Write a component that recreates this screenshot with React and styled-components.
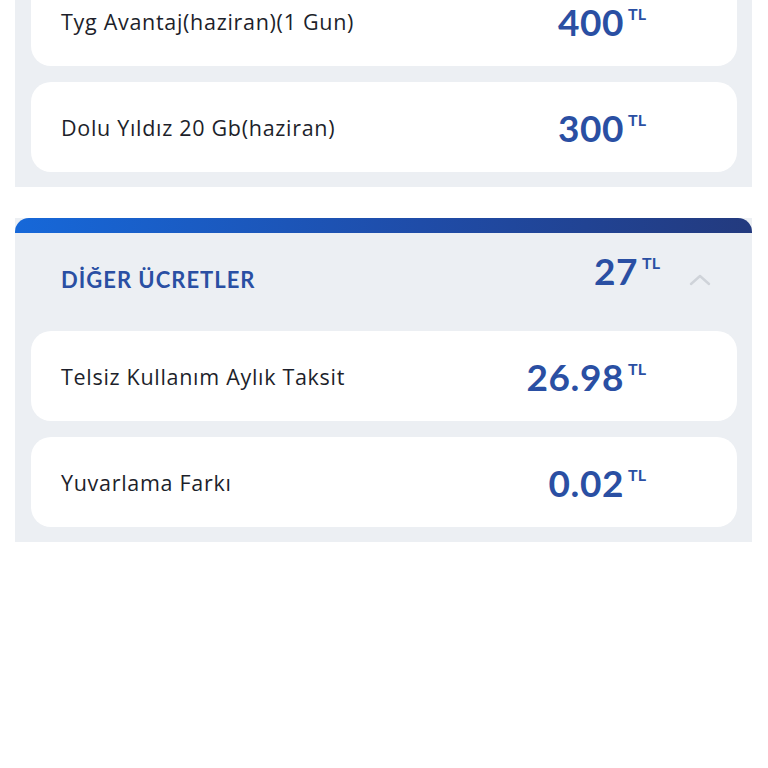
import React from "react";
import styled, { createGlobalStyle } from "styled-components";

const Global = createGlobalStyle`
  html, body { margin: 0; padding: 0; background: #ffffff; }
  body { font-family: "Lato", "Open Sans", sans-serif; }
`;

const Page = styled.div`
  display: flex;
  flex-direction: column;
  gap: 31px;
  padding: 0 16px 0 15px;
  margin-top: -40px;
`;

const Section = styled.section`
  background: #eceff3;
  display: flex;
  flex-direction: column;
`;

const TopBar = styled.div`
  height: 15px;
  border-radius: 14px 14px 0 0;
  background: linear-gradient(90deg, #1668d9 0%, #1f4ca8 55%, #233a7e 100%);
`;

const Header = styled.div`
  display: flex;
  align-items: center;
  height: 98px;
  padding: 0 40px 0 46px;
`;

const Title = styled.h2`
  flex: 1;
  margin: 0 0 6px;
  font-size: 22px;
  font-weight: 700;
  color: #2a4fa3;
  letter-spacing: 1px;
`;

const Chevron = styled.svg`
  width: 24px;
  height: 16px;
  margin-left: 28px;
  margin-bottom: 6px;
`;

const List = styled.div`
  display: flex;
  flex-direction: column;
  gap: 16px;
  padding: ${(p) => (p.$top ? "16px" : "0")} 15px 15px 16px;
`;

const Card = styled.div`
  height: 90px;
  background: #ffffff;
  border-radius: 20px;
  display: flex;
  align-items: center;
  padding: 0 91px 0 30px;
`;

const Label = styled.span`
  flex: 1;
  font-family: "Open Sans", "Lato", sans-serif;
  font-size: 21.5px;
  color: #1d1f2b;
  letter-spacing: 0.7px;
`;

const Amount = styled.span`
  display: inline-flex;
  align-items: flex-start;
  color: #2a4fa3;
  font-weight: 700;
  font-size: 37px;
  line-height: 1;
  letter-spacing: 0.6px;
  margin-bottom: ${(p) => (p.$raised ? "24px" : "0")};
`;

const Unit = styled.sup`
  font-size: 16px;
  font-weight: 700;
  margin-left: 4px;
  margin-top: 3px;
  vertical-align: top;
  line-height: 1;
  letter-spacing: 0;
`;

const Price = ({ value, raised }) => (
  <Amount $raised={raised}>
    {value}
    <Unit>TL</Unit>
  </Amount>
);

const Row = ({ label, value }) => (
  <Card>
    <Label>{label}</Label>
    <Price value={value} />
  </Card>
);

export default function App() {
  return (
    <>
      <Global />
      <Page>
        <Section>
          <List $top>
            <Row label="Tyg Avantaj(haziran)(1 Gun)" value="400" />
            <Row label="Dolu Yıldız 20 Gb(haziran)" value="300" />
          </List>
        </Section>
        <Section>
          <TopBar />
          <Header>
            <Title>DİĞER ÜCRETLER</Title>
            <Price value="27" raised />
            <Chevron viewBox="0 0 24 16" fill="none">
              <path d="M3 13 L12 5 L21 13" stroke="#cfd3d9" strokeWidth="2.4" strokeLinecap="round" strokeLinejoin="round" />
            </Chevron>
          </Header>
          <List>
            <Row label="Telsiz Kullanım Aylık Taksit" value="26.98" />
            <Row label="Yuvarlama Farkı" value="0.02" />
          </List>
        </Section>
      </Page>
    </>
  );
}
